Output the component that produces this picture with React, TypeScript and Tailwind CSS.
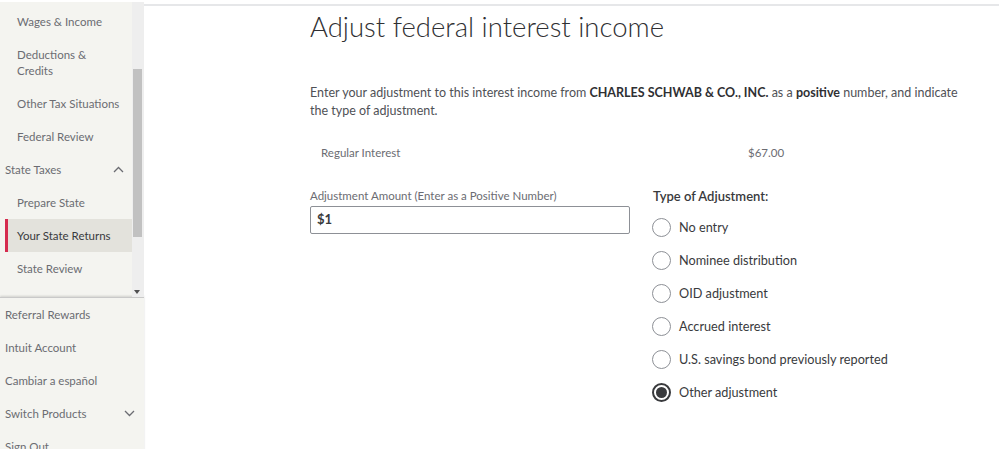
import React from "react";

const font = { fontFamily: "Lato, 'Noto Sans', sans-serif" };

function ChevronUp() {
  return (
    <svg width="11" height="7" viewBox="0 0 11 7" fill="none">
      <path d="M1 6L5.5 1.5L10 6" stroke="#6b6c72" strokeWidth="1.3" />
    </svg>
  );
}
function ChevronDown() {
  return (
    <svg width="11" height="7" viewBox="0 0 11 7" fill="none">
      <path d="M1 1L5.5 5.5L10 1" stroke="#6b6c72" strokeWidth="1.3" />
    </svg>
  );
}

function Sub({ children, active = false }: { children: React.ReactNode; active?: boolean }) {
  if (active) {
    return (
      <div className="flex h-[33px] items-center bg-[#e3e2dc] border-l-[3px] border-[#d52b4e] pl-[9px] text-[11.5px] text-[#393a3d]">
        {children}
      </div>
    );
  }
  return (
    <div className="flex h-[33px] items-center pl-[12px] text-[11.5px] text-[#6b6c72]">{children}</div>
  );
}

function Radio({ label, checked = false }: { label: string; checked?: boolean }) {
  return (
    <div className="flex h-[33px] items-center">
      {checked ? (
        <div className="flex h-[19px] w-[19px] items-center justify-center rounded-full border-[2px] border-[#393a3d]">
          <div className="h-[11px] w-[11px] rounded-full bg-[#393a3d]" />
        </div>
      ) : (
        <div className="h-[19px] w-[19px] rounded-full border border-[#8d9096] bg-white" />
      )}
      <span className="ml-[8px] text-[12.7px] text-[#393a3d]">{label}</span>
    </div>
  );
}

export default function App() {
  return (
    <div className="flex h-[449px] w-[999px] overflow-hidden bg-white" style={font}>
      {/* Sidebar */}
      <div className="flex w-[144px] shrink-0 flex-col bg-[#f4f4f0]">
        <div className="relative flex h-[297px] shrink-0 border-t-2 border-white">
          <div className="w-[132px] overflow-hidden pl-[5px] pt-[3px]">
            <Sub>Wages &amp; Income</Sub>
            <div className="flex h-[49px] flex-col justify-center pl-[12px] text-[11.5px] leading-[16px] text-[#6b6c72]">
              <span>Deductions &amp;</span>
              <span>Credits</span>
            </div>
            <Sub>Other Tax Situations</Sub>
            <Sub>Federal Review</Sub>
            <div className="flex h-[33px] items-center justify-between pr-[8px] text-[11.5px] text-[#6b6c72]">
              <span>State Taxes</span>
              <ChevronUp />
            </div>
            <Sub>Prepare State</Sub>
            <Sub active>Your State Returns</Sub>
            <Sub>State Review</Sub>
            <Sub>Tax Tools</Sub>
          </div>
          <div className="relative w-[12px] bg-[#eeeeee]">
            <div className="absolute left-[1px] top-[67px] h-[168px] w-[9px] bg-[#c1c1c1]" />
            <div className="absolute bottom-[3px] left-[2px] h-0 w-0 border-x-[3.5px] border-t-[4px] border-x-transparent border-t-[#505050]" />
          </div>
        </div>
        <div className="flex-1 border-t border-[#c9c9c9] pl-[5px] shadow-[0_-1px_2px_rgba(0,0,0,0.15)]">
          <div className="flex h-[33px] items-center text-[11.5px] text-[#6b6c72]">Referral Rewards</div>
          <div className="flex h-[33px] items-center text-[11.5px] text-[#6b6c72]">Intuit Account</div>
          <div className="flex h-[33px] items-center text-[11.5px] text-[#6b6c72]">Cambiar a español</div>
          <div className="flex h-[33px] items-center justify-between pr-[9px] text-[11.5px] text-[#6b6c72]">
            <span>Switch Products</span>
            <ChevronDown />
          </div>
          <div className="flex h-[33px] items-center text-[11.5px] text-[#6b6c72]">Sign Out</div>
        </div>
      </div>

      {/* Main */}
      <div className="flex-1">
        <div className="mt-[4px] h-[2px] bg-[#e6e7e9]" />
        <div className="pl-[166px] pr-[30px]">
          <h1 className="mt-[1px] text-[27.5px] font-light leading-[40px] text-[#2f3033]">
            Adjust federal interest income
          </h1>
          <p className="mt-[37px] w-[660px] text-[12.5px] leading-[18px] text-[#4f5156]">
            Enter your adjustment to this interest income from{" "}
            <b className="font-bold text-[#2f3033]">CHARLES SCHWAB &amp; CO., INC.</b> as a{" "}
            <b className="font-bold text-[#2f3033]">positive</b> number, and indicate the type of adjustment.
          </p>
          <div className="mt-[24px] flex h-[18px] items-center text-[11.5px] text-[#6b6c72]">
            <span className="w-[438px] pl-[11px]">Regular Interest</span>
            <span>$67.00</span>
          </div>
          <div className="mt-[23px] flex">
            <div className="w-[343px]">
              <div className="mt-[2px] text-[11.5px] leading-[18px] text-[#6b6c72]">
                Adjustment Amount (Enter as a Positive Number)
              </div>
              <div className="mt-[1px] flex h-[28px] w-[320px] items-center rounded-[2px] border border-[#8d9096] pl-[6px] text-[13px] font-bold text-[#393a3d]">
                $1
              </div>
            </div>
            <div className="flex flex-col">
              <div className="mt-[2px] text-[13px] font-semibold leading-[18px] text-[#393a3d]">Type of Adjustment:</div>
              <div className="mt-[6px] -ml-[1px]">
                <Radio label="No entry" />
                <Radio label="Nominee distribution" />
                <Radio label="OID adjustment" />
                <Radio label="Accrued interest" />
                <Radio label="U.S. savings bond previously reported" />
                <Radio label="Other adjustment" checked />
              </div>
            </div>
          </div>
        </div>
      </div>
    </div>
  );
}
